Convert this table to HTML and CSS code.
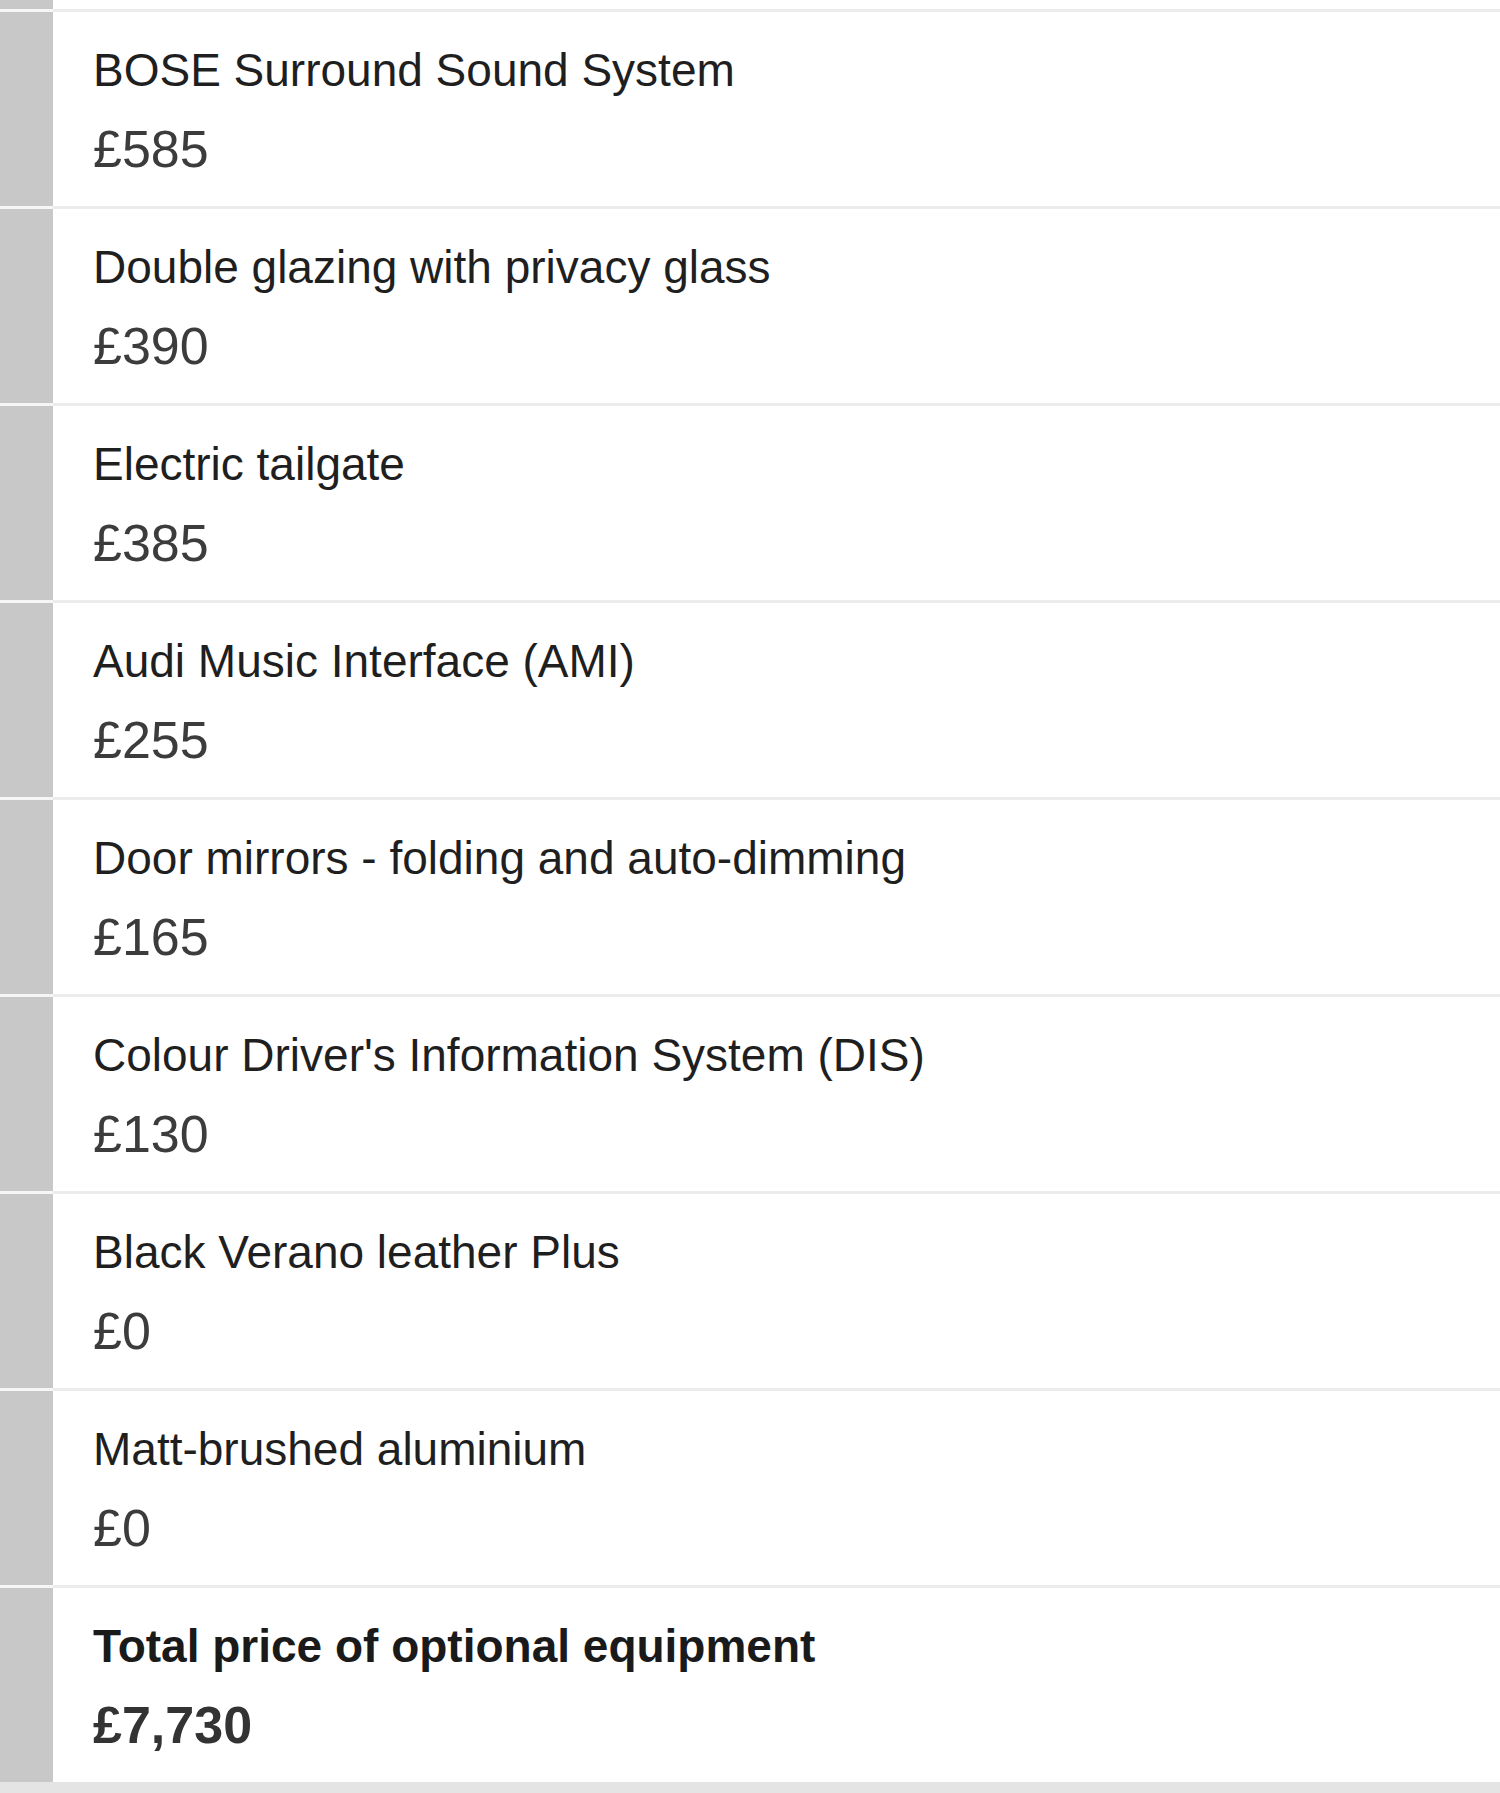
FILE: index.html
```html
<!DOCTYPE html>
<html lang="en">
<head>
<meta charset="utf-8">
<title>Optional equipment</title>
<link rel="stylesheet" href="styles.css">
</head>
<body>
<div class="list">
  <div class="row row-top"><div class="bar"></div><div class="content"></div></div>
  <div class="row"><div class="bar"></div><div class="content"><div class="name">BOSE Surround Sound System</div><div class="price">£585</div></div></div>
  <div class="row"><div class="bar"></div><div class="content"><div class="name">Double glazing with privacy glass</div><div class="price">£390</div></div></div>
  <div class="row"><div class="bar"></div><div class="content"><div class="name">Electric tailgate</div><div class="price">£385</div></div></div>
  <div class="row"><div class="bar"></div><div class="content"><div class="name">Audi Music Interface (AMI)</div><div class="price">£255</div></div></div>
  <div class="row"><div class="bar"></div><div class="content"><div class="name">Door mirrors - folding and auto-dimming</div><div class="price">£165</div></div></div>
  <div class="row"><div class="bar"></div><div class="content"><div class="name">Colour Driver's Information System (DIS)</div><div class="price">£130</div></div></div>
  <div class="row"><div class="bar"></div><div class="content"><div class="name">Black Verano leather Plus</div><div class="price">£0</div></div></div>
  <div class="row"><div class="bar"></div><div class="content"><div class="name">Matt-brushed aluminium</div><div class="price">£0</div></div></div>
  <div class="row total"><div class="bar"></div><div class="content"><div class="name">Total price of optional equipment</div><div class="price">£7,730</div></div></div>
  <div class="footer"></div>
</div>
</body>
</html>
```

FILE: styles.css
```css
html, body {
  margin: 0;
  padding: 0;
  background: #ffffff;
}
body {
  font-family: "Liberation Sans", Arial, sans-serif;
  width: 1500px;
  height: 1793px;
  overflow: hidden;
}
.list {
  display: flex;
  flex-direction: column;
}
.row {
  display: grid;
  grid-template-columns: 53px 1fr;
}
.bar {
  background: #c8c8c8;
  border-top: 3px solid #f6f6f6;
}
.content {
  border-top: 3px solid #ececec;
  padding: 30px 0 26px 40px;
}
.row-top .bar,
.row-top .content {
  border-top: 0;
  height: 9px;
  padding: 0;
}
.name {
  font-size: 46px;
  line-height: 56px;
  color: #1f1f1f;
  white-space: nowrap;
}
.price {
  margin-top: 20px;
  font-size: 52px;
  line-height: 62px;
  color: #3c3c3c;
  white-space: nowrap;
}
.total .name {
  font-weight: bold;
  color: #1a1a1a;
}
.total .price {
  font-weight: bold;
  color: #333333;
}
.footer {
  height: 12px;
  background: #e4e4e4;
}
```
